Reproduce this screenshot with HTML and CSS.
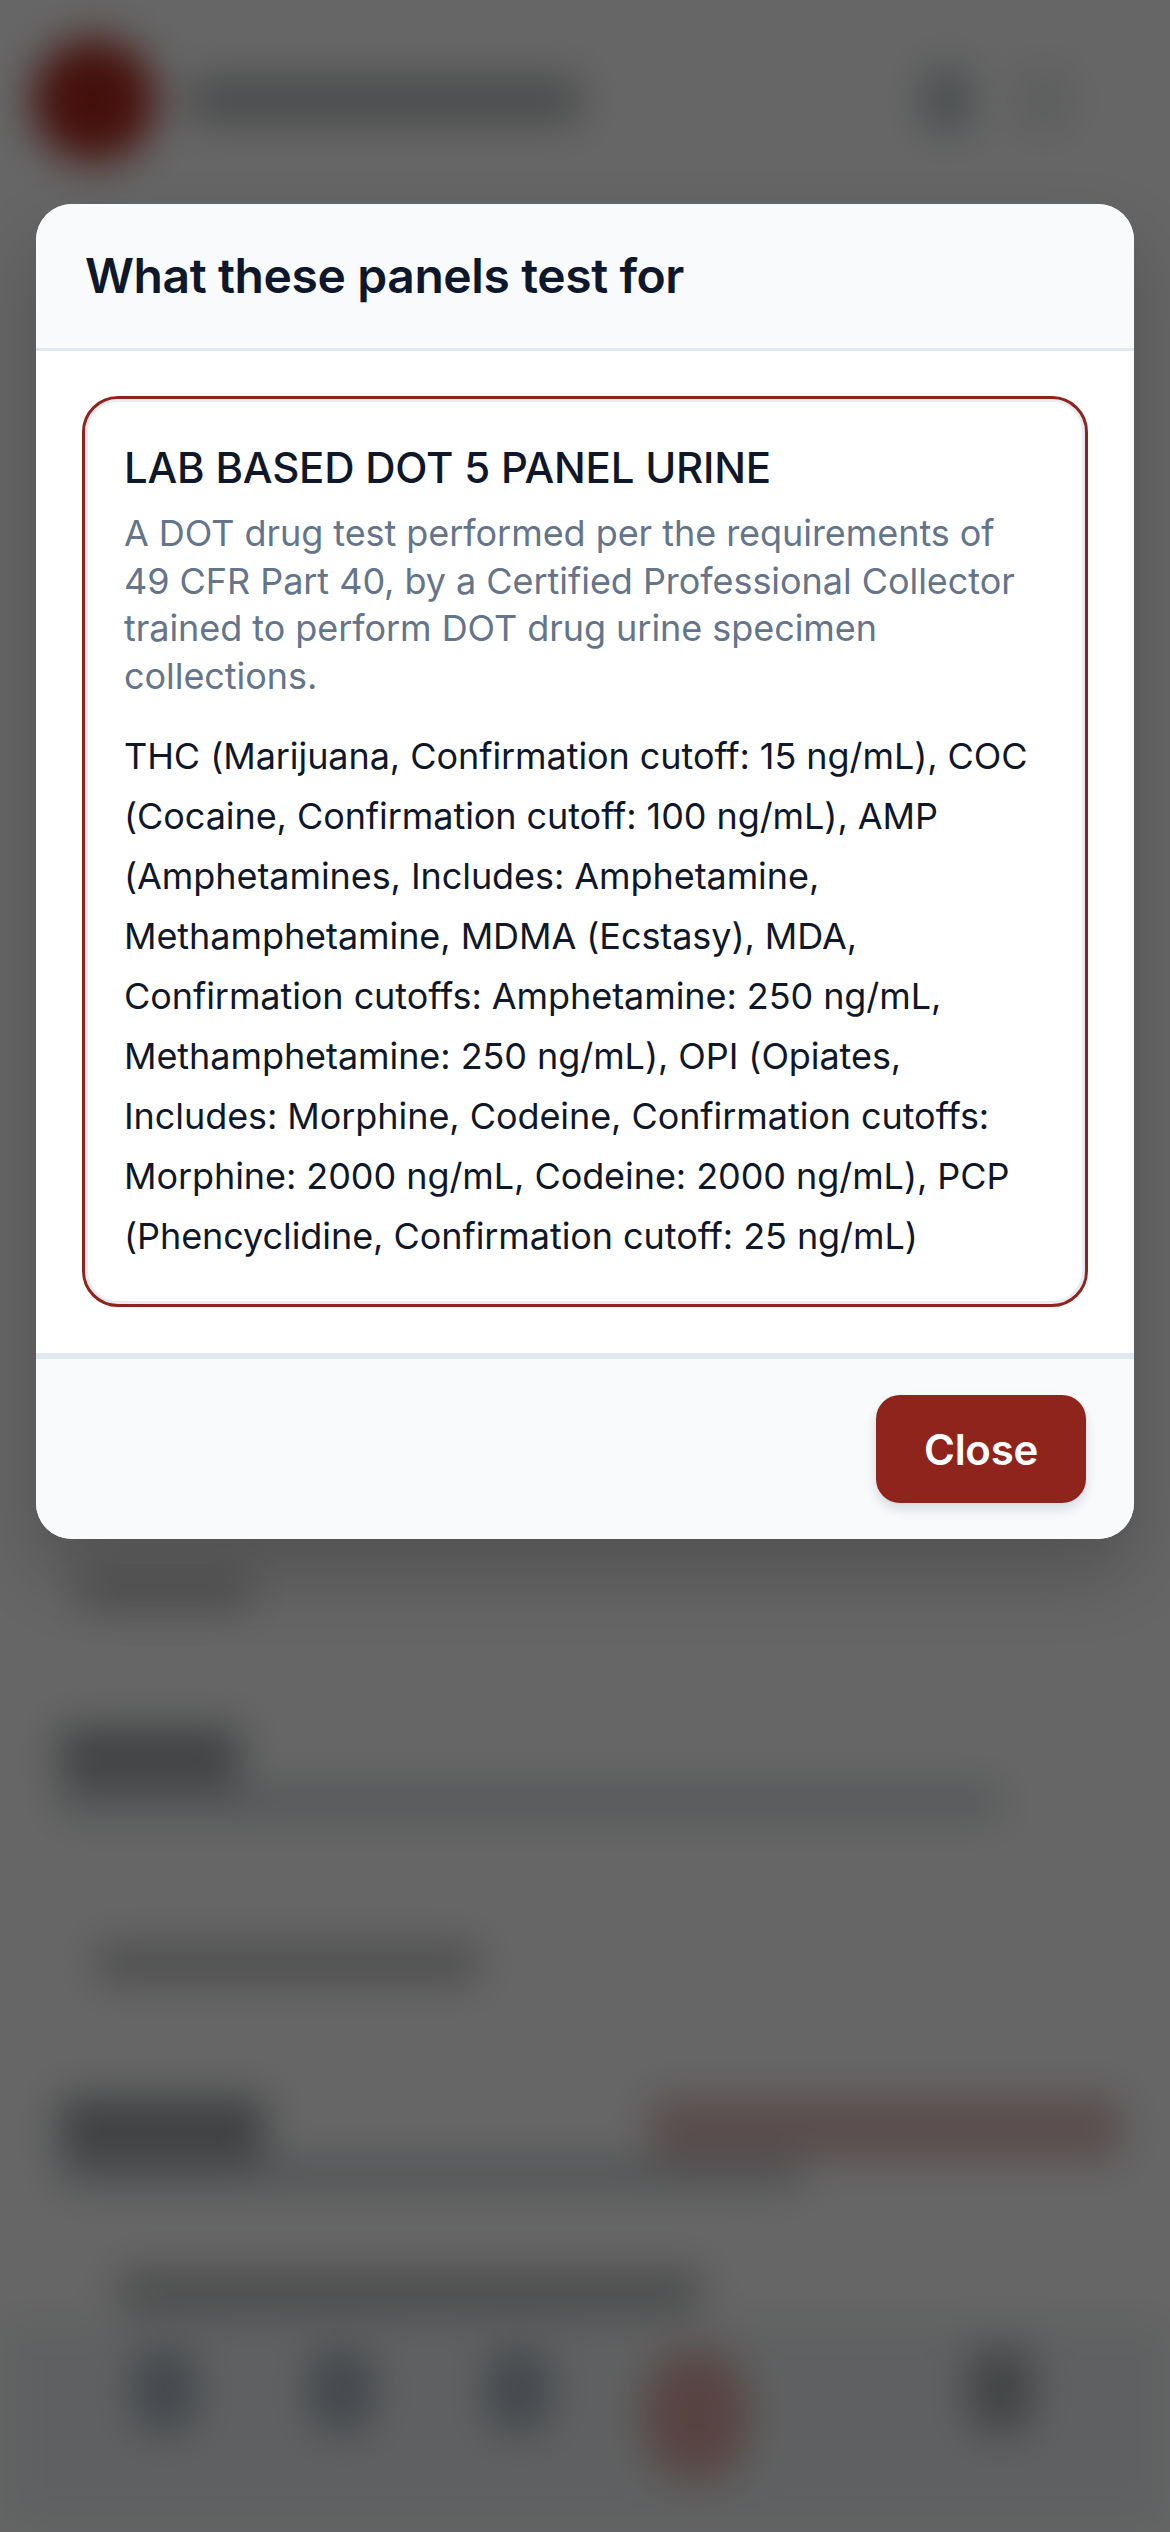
FILE: index.html
```html
<!DOCTYPE html>
<html lang="en">
<head>
<meta charset="utf-8">
<title>What these panels test for</title>
<link rel="stylesheet" href="styles.css">
</head>
<body>
<div class="backdrop" aria-hidden="true">
  <div class="topbar">
    <div class="logo"></div>
    <div class="brand"></div>
    <div class="nav-icon"></div>
    <div class="nav-icon nav-icon-faint"></div>
  </div>
  <div class="sec-label"></div>
  <div class="sec-wrap">
    <div class="heading"></div>
    <div class="line line-one"></div>
    <div class="pill-row">
      <div class="pill-text"></div>
      <div class="pill-light"></div>
    </div>
    <div class="head-row">
      <div class="heading heading-two"></div>
      <div class="red-bar"></div>
    </div>
    <div class="line line-two"></div>
    <div class="row-text"></div>
  </div>
  <div class="tabs">
    <div class="tab"></div>
    <div class="tab"></div>
    <div class="tab"></div>
    <div class="tab tab-red"></div>
    <div class="tab tab-last"></div>
  </div>
</div>
<div class="overlay">
  <section class="modal">
    <header class="modal-head">
      <h2 class="modal-title">What these panels test for</h2>
    </header>
    <div class="modal-body">
      <article class="card">
        <h3 class="card-title">LAB BASED DOT 5 PANEL URINE</h3>
        <p class="card-desc">A DOT drug test performed per the requirements of 49 CFR Part 40, by a Certified Professional Collector trained to perform DOT drug urine specimen collections.</p>
        <p class="card-list">THC (Marijuana, Confirmation cutoff: 15 ng/mL), COC (Cocaine, Confirmation cutoff: 100 ng/mL), AMP (Amphetamines, Includes: Amphetamine, Methamphetamine, MDMA (Ecstasy), MDA, Confirmation cutoffs: Amphetamine: 250 ng/mL, Methamphetamine: 250 ng/mL), OPI (Opiates, Includes: Morphine, Codeine, Confirmation cutoffs: Morphine: 2000 ng/mL, Codeine: 2000 ng/mL), PCP (Phencyclidine, Confirmation cutoff: 25 ng/mL)</p>
      </article>
    </div>
    <footer class="modal-foot">
      <button class="close-btn" type="button">Close</button>
    </footer>
  </section>
</div>
</body>
</html>
```
FILE: styles.css
```css
* { box-sizing: border-box; }
html, body { margin: 0; padding: 0; }
body {
  width: 1170px;
  height: 2532px;
  overflow: hidden;
  position: relative;
  background: #fff;
  font-family: Inter, "Noto Sans", sans-serif;
}
.backdrop {
  width: 1170px;
  height: 2532px;
  overflow: hidden;
  background: #fff;
  filter: blur(20px);
  padding: 27px 0 0;
}
.topbar { display: flex; align-items: center; padding: 0 0 0 32px; height: 146px; }
.logo { width: 124px; height: 124px; border-radius: 50%; background: #ad2a20; flex: none; }
.brand { width: 390px; height: 44px; margin-left: 34px; background: #b5b8bb; }
.nav-icon { width: 44px; height: 60px; margin-left: 345px; background: #b2bcc2; border-radius: 8px; }
.nav-icon-faint { margin-left: 50px; width: 50px; background: #e6e8e8; }
.sec-label { width: 170px; height: 36px; margin: 1400px 0 0 80px; background: #c8c8ca; }
.sec-wrap { padding: 0 60px; margin-top: 118px; }
.heading { width: 180px; height: 58px; background: #a0a5a8; }
.line { height: 26px; background: #c8cfd3; }
.line-one { width: 940px; margin-top: 4px; }
.pill-row { display: flex; margin-top: 88px; align-items: center; padding-left: 37px; }
.pill-text { width: 380px; height: 36px; background: #bcbec0; }
.pill-light { width: 590px; height: 120px; margin-left: 43px; background: #ffffff; }
.head-row { display: flex; justify-content: space-between; margin-top: 74px; margin-right: -10px; align-items: center; }
.heading-two { width: 205px; height: 62px; background: #9ca1a5; }
.red-bar { width: 470px; height: 62px; background: #dcc0be; }
.line-two { width: 740px; margin-top: 2px; height: 26px; background: #c2c9ce; }
.row-text { width: 580px; height: 44px; margin: 83px 0 0 60px; background: #bcbec0; }
.tabs { display: flex; margin-top: 8px; padding: 26px 0 120px 132px; background: #eef1f3; }
.tab { width: 65px; height: 84px; margin-right: 112px; background: #aab4bf; border-radius: 20px; }
.tab-red { margin-top: 2px; width: 104px; height: 130px; margin-left: -19px; margin-right: 220px; background: #dca9a7; border-radius: 50px; }
.tab-last { margin-right: 0; background: #a3a9ae; }

.overlay {
  position: absolute;
  inset: 0;
  background: rgba(0, 0, 0, 0.6);
  padding: 204px 36px 0;
}
.modal {
  width: 1098px;
  height: 1335px;
  background: #fff;
  border-radius: 36px;
  overflow: hidden;
  display: flex;
  flex-direction: column;
  box-shadow: 0 36px 72px rgba(0, 0, 0, 0.2);
}
.modal-head {
  height: 147px;
  flex: none;
  display: flex;
  align-items: center;
  padding: 0 48px 0 49px;
  background: #f8fafc;
  border-bottom: 3px solid #e2e8f0;
}
.modal-title {
  margin: 0;
  font-size: 48px;
  font-weight: 600;
  line-height: 60px;
  letter-spacing: -0.4px;
  color: #0f172a;
}
.modal-body { flex: 1; padding: 45px 46px 46px; }
.card {
  height: 911px;
  border: 3px solid #8f241d;
  border-radius: 36px;
  padding: 42px 39px 0;
  box-shadow: inset 0 0 0 3px #e8ebf2;
}
.card-title {
  margin: 0;
  font-size: 42px;
  font-weight: 500;
  line-height: 54px;
  letter-spacing: -0.22px;
  color: #0f172a;
}
.card-desc {
  margin: 15px 0 0;
  font-size: 36px;
  line-height: 47.6px;
  letter-spacing: -0.05px;
  color: #64748b;
}
.card-list {
  margin: 26px 0 0;
  font-size: 36px;
  line-height: 60px;
  letter-spacing: -0.07px;
  color: #0f172a;
}
.modal-foot {
  flex: none;
  height: 186px;
  display: flex;
  justify-content: flex-end;
  align-items: flex-start;
  padding: 36px 48px 0;
  background: #f8fafc;
  border-top: 6px solid #e2e8f0;
}
.close-btn {
  width: 210px;
  height: 108px;
  border: 0;
  border-radius: 24px;
  background: #8f241d;
  color: #fff;
  font-family: inherit;
  font-size: 42px;
  font-weight: 600;
  letter-spacing: -0.3px;
  box-shadow: 0 6px 12px rgba(15, 23, 42, 0.14);
}
```
